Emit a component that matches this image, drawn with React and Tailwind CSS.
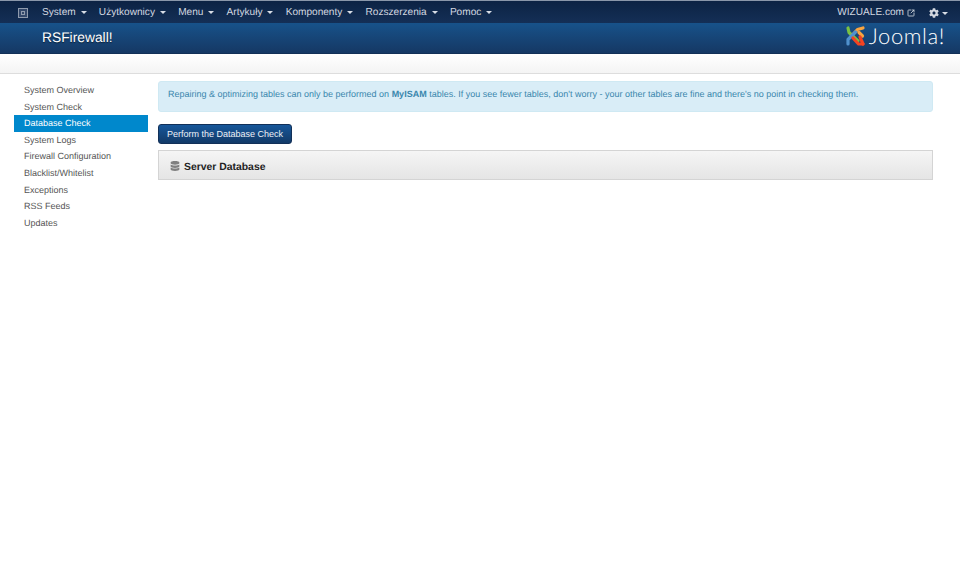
import { FaCog, FaDatabase } from 'react-icons/fa';
import { SquareArrowOutUpRight } from 'lucide-react';

const menu = ['System', 'Użytkownicy', 'Menu', 'Artykuły', 'Komponenty', 'Rozszerzenia', 'Pomoc'];
const side = [
    'System Overview',
    'System Check',
    'Database Check',
    'System Logs',
    'Firewall Configuration',
    'Blacklist/Whitelist',
    'Exceptions',
    'RSS Feeds',
    'Updates',
];

function Caret() {
    return <span className="ml-[5px] mt-[1px] w-0 h-0 border-x-[3px] border-x-transparent border-t-[3px] border-t-[#d8dde6]" />;
}

function JoomlaMark() {
    return (
        <svg width="21" height="22" viewBox="0 0 21 22" fill="none" strokeWidth="3.2" strokeLinecap="round" strokeLinejoin="round">
            <path d="M3 3 L4 7.5 L13 16" stroke="#7ac143" />
            <path d="M18 3 L12.5 4.5 L6 11.5" stroke="#f9a541" />
            <path d="M3 19 L3 14.5 L10.5 7" stroke="#5091cd" />
            <path d="M18 19 L13.5 19 L8 13 " stroke="#f44321" />
            <path d="M14 7.5 L17.5 11" stroke="#f9a541" />
            <path d="M15 12 L18 19" stroke="#f44321" />
        </svg>
    );
}

export default function App() {
    return (
        <div className="min-h-[583px] bg-white font-['Liberation_Sans',Arial,sans-serif] text-[9px] [text-rendering:geometricPrecision]">
            {/* top menu */}
            <div className="h-[23px] pt-[1px] bg-gradient-to-b from-[#0c2344] to-[#142f56] border-t border-[#8a97aa] flex items-center text-[#d3d8e0] text-[10.1px]">
                <div className="w-[10px] h-[10px] ml-[18px] mr-[14px] border border-[#8f9bad] bg-[#33486a] flex items-center justify-center">
                    <span className="w-[4px] h-[4px] border border-[#8f9bad]" />
                </div>
                <div className="flex items-center gap-[12.2px]">
                    {menu.map((m) => (
                        <span key={m} className="flex items-center">
                            {m}
                            <Caret />
                        </span>
                    ))}
                </div>
                <span className="ml-auto">WIZUALE.com</span>
                <SquareArrowOutUpRight size={8} strokeWidth={2.5} className="ml-[3px]" />
                <FaCog size={10} className="ml-[14px]" />
                <span className="ml-[-2px] mr-[12px] flex"><Caret /></span>
            </div>

            {/* title bar */}
            <div className="h-[31px] bg-gradient-to-b from-[#17528a] to-[#153864] border-b border-[#123057] flex items-center pl-[42px] pr-[15px]">
                <h1 className="text-white text-[13.8px] leading-none [text-shadow:0_1px_1px_rgba(0,0,0,0.5)]">RSFirewall!</h1>
                <div className="ml-auto flex items-center gap-[3px] -mt-[4px]">
                    <JoomlaMark />
                    <span className="font-['Lato',sans-serif] font-light text-white text-[22px] tracking-[0.6px] leading-none">Joomla!</span>
                </div>
            </div>

            {/* empty toolbar */}
            <div className="h-[20px] bg-gradient-to-b from-white to-[#f4f4f4] border-b border-[#dddddd]" />

            <div className="flex pt-[7px] pl-[14px] pr-[27px]">
                <nav className="w-[134px] mr-[10px] pt-[1px] flex flex-col text-[#555555] shrink-0">
                    {side.map((s) => (
                        <div
                            key={s}
                            className={
                                s === 'Database Check'
                                    ? 'h-[16.6px] leading-[16.6px] pl-[10px] bg-[#0088cc] text-white'
                                    : 'h-[16.6px] leading-[16.6px] pl-[10px]'
                            }
                        >
                            {s}
                        </div>
                    ))}
                </nav>

                <main className="flex-1 min-w-0">
                    <div className="h-[31px] pl-[9px] pb-[4px] flex items-center bg-[#d9edf7] border border-[#cfe9f3] rounded-[3px] text-[#3a87ad] text-[9px]">
                        <span>
                            Repairing &amp; optimizing tables can only be performed on <b>MyISAM</b> tables. If you see fewer tables, don't worry - your other tables are fine and there's no point in checking them.
                        </span>
                    </div>
                    <button className="mt-[12px] block h-[20px] w-[134px] pt-[2px] rounded-[3px] bg-gradient-to-b from-[#17579a] to-[#123a68] border border-[#123058] text-[#eef2f7] text-[9px] text-center">
                        Perform the Database Check
                    </button>
                    <div className="mt-[6px] h-[30px] pl-[11px] flex items-center bg-gradient-to-b from-[#f5f5f5] to-[#e5e5e5] border border-[#d4d4d4] text-[#222222] text-[10.4px] font-bold">
                        <FaDatabase size={10} className="text-[#808080] mt-[1px]" />
                        <span className="ml-[4px] mt-[6px]">Server Database</span>
                    </div>
                </main>
            </div>
        </div>
    );
}
